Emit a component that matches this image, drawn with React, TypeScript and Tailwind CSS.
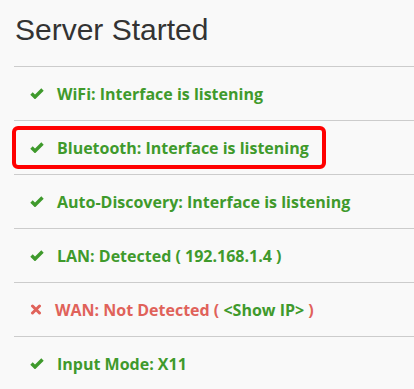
import React from "react";

const Check = () => (
  <svg width="14" height="11" viewBox="0 0 14 11" className="shrink-0">
    <path d="M1.5 5.5 L5 9 L12.5 1.5" fill="none" stroke="#3f9a2c" strokeWidth="3.4" strokeLinecap="butt" />
  </svg>
);

const Cross = () => (
  <svg width="12" height="11" viewBox="0 0 12 11" className="shrink-0">
    <path d="M2.5 2 L9.5 9 M9.5 2 L2.5 9" fill="none" stroke="#e0625a" strokeWidth="3" strokeLinecap="round" />
  </svg>
);

const green = "text-[#3f9a2c]";

export default function App() {
  const rows: { ok: boolean; content: React.ReactNode }[] = [
    { ok: true, content: "WiFi: Interface is listening" },
    { ok: true, content: "Bluetooth: Interface is listening" },
    { ok: true, content: "Auto-Discovery: Interface is listening" },
    { ok: true, content: "LAN: Detected ( 192.168.1.4 )" },
    {
      ok: false,
      content: (
        <>
          WAN: Not Detected ( <span className={green}>&lt;Show IP&gt;</span> )
        </>
      ),
    },
    { ok: true, content: "Input Mode: X11" },
  ];
  return (
    <div className="w-[414px] h-[389px] bg-[#f9f9f9] overflow-hidden relative">
      <h1
        className="pl-[15px] pt-[13px] h-[66px] text-[30px] leading-[34px] text-[#333333]"
        style={{ fontFamily: '"Liberation Sans", Arial, sans-serif' }}
      >
        Server Started
      </h1>
      <ul className="ml-[14px]" style={{ fontFamily: '"Open Sans", sans-serif' }}>
        {rows.map((r, i) => (
          <li
            key={i}
            className={`h-[54px] border-t border-[#cccccc] flex items-center gap-[13px] text-[16px] font-bold ${r.ok ? green + " pl-[16px]" : "text-[#e0625a] pl-[16px]"}`}
          >
            {r.ok ? <Check /> : <Cross />}
            <span>{r.content}</span>
          </li>
        ))}
      </ul>
      <div className="absolute left-[12px] top-[126px] w-[314px] h-[43px] border-4 border-[#ff0000] rounded-[6px]" />
    </div>
  );
}
